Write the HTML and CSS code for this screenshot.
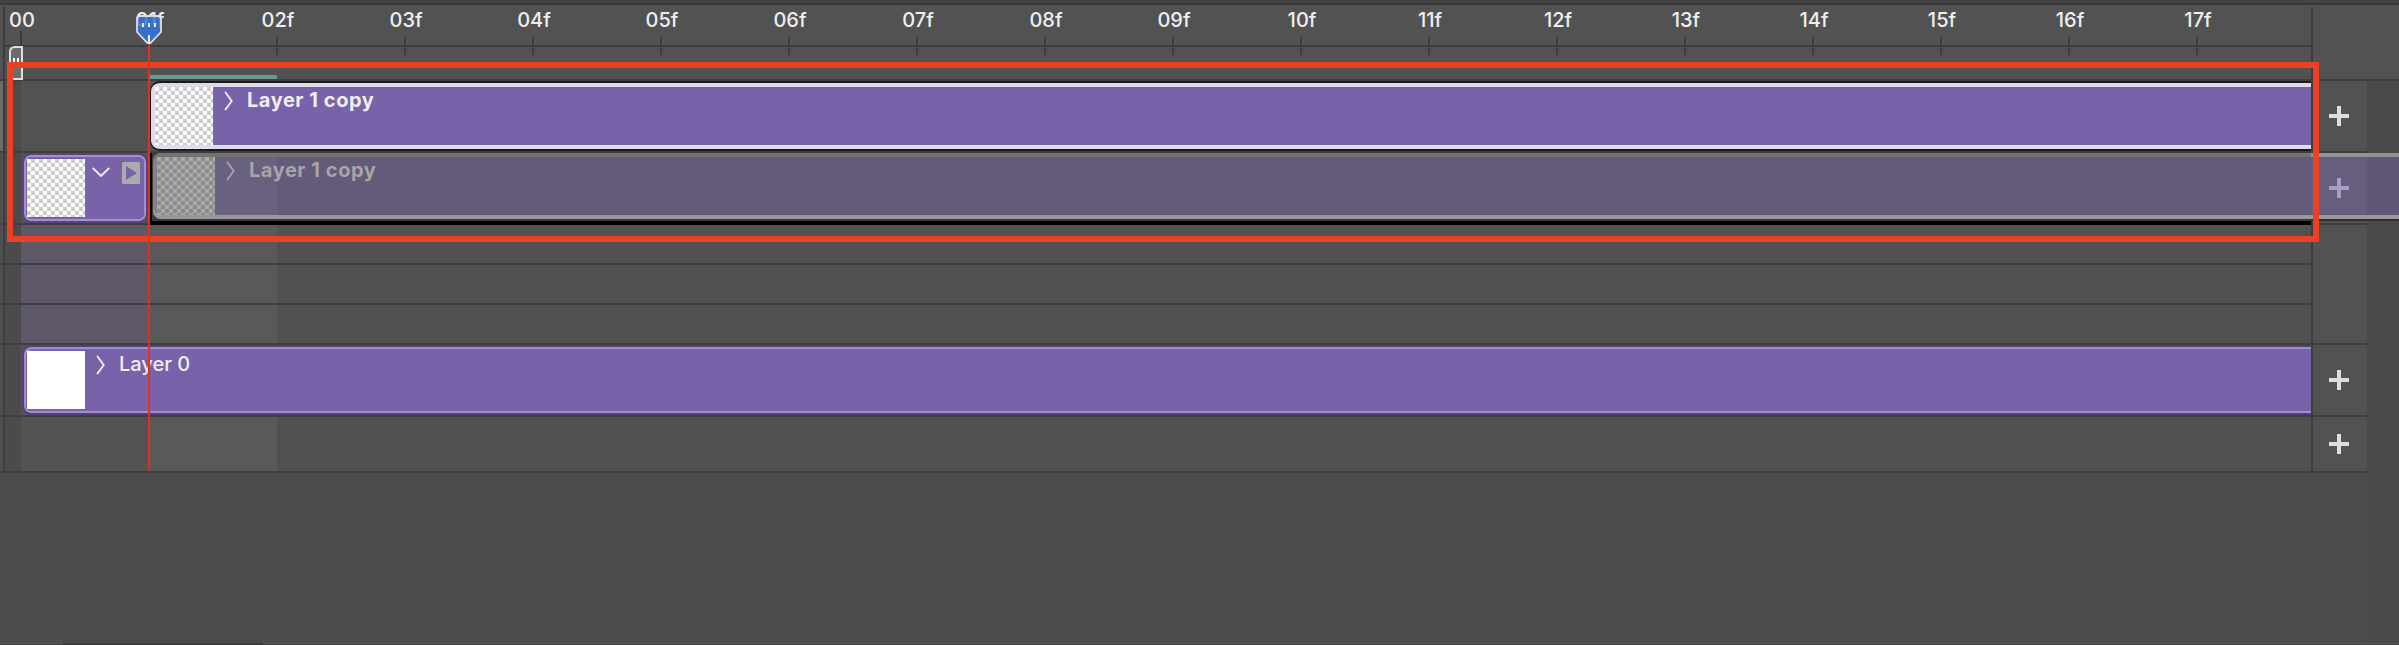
FILE: index.html
```html
<!DOCTYPE html>
<html lang="en">
<head>
<meta charset="utf-8">
<title>Timeline</title>
<link rel="stylesheet" href="styles.css">
</head>
<body>
<main class="timeline">
  <div class="top-edge"></div>
  <header class="header">
    <div class="edge"></div>
    <div class="ruler">
      <div class="scale">
        <div class="frame first"><span>00</span></div><div class="frame"><span>01f</span></div><div class="frame"><span>02f</span></div><div class="frame"><span>03f</span></div><div class="frame"><span>04f</span></div><div class="frame"><span>05f</span></div><div class="frame"><span>06f</span></div><div class="frame"><span>07f</span></div><div class="frame"><span>08f</span></div><div class="frame"><span>09f</span></div><div class="frame"><span>10f</span></div><div class="frame"><span>11f</span></div><div class="frame"><span>12f</span></div><div class="frame"><span>13f</span></div><div class="frame"><span>14f</span></div><div class="frame"><span>15f</span></div><div class="frame"><span>16f</span></div><div class="frame"><span>17f</span></div>
      </div>
      <div class="cache"><div class="cache-bar"></div></div>
    </div>
  </header>

  <section class="row tall">
    <div class="edge selected"></div>
    <div class="track plain">
      <div class="clip active">
        <div class="thumb checker"></div>
        <svg class="chevron" viewBox="0 0 10 20"><path d="M1.5 1.5 L7.7 10 L1.5 18.5"/></svg>
        <span class="name bold">Layer 1 copy</span>
      </div>
    </div>
    <div class="add"><i class="plus"></i></div>
  </section>

  <section class="row tall">
    <div class="edge"></div>
    <div class="track plain">
      <div class="clip short">
        <div class="thumb checker"></div>
        <svg class="chevron-down" viewBox="0 0 18 11"><path d="M1.3 1.5 L9 9 L16.7 1.5"/></svg>
        <svg class="play" viewBox="0 0 18 22"><rect width="18" height="22" rx="1.5" fill="#ababab"/><path d="M4 4 L15 11 L4 18 Z" fill="#7862a9"/></svg>
      </div>
      <div class="ghost-box">
        <div class="clip ghost">
          <div class="thumb checker dim"></div>
          <svg class="chevron" viewBox="0 0 10 20"><path d="M1.5 1.5 L7.7 10 L1.5 18.5"/></svg>
          <span class="name bold">Layer 1 copy</span>
        </div>
      </div>
    </div>
    <div class="add"></div>
    <div class="ghost-tail"><i class="plus faded"></i></div>
  </section>

  <section class="row slim group"><div class="edge"></div><div class="track"></div><div class="add"></div></section>
  <section class="row slim group"><div class="edge"></div><div class="track"></div><div class="add"></div></section>
  <section class="row slim group last"><div class="edge"></div><div class="track"></div><div class="add"></div></section>

  <section class="row tall">
    <div class="edge"></div>
    <div class="track">
      <div class="clip base">
        <div class="thumb"></div>
        <svg class="chevron" viewBox="0 0 10 20"><path d="M1.5 1.5 L7.7 10 L1.5 18.5"/></svg>
        <span class="name">Layer 0</span>
      </div>
    </div>
    <div class="add"><i class="plus"></i></div>
  </section>

  <section class="row foot">
    <div class="edge"></div><div class="track"></div><div class="add"><i class="plus"></i></div>
  </section>

  <div class="empty"></div>
  <div class="scrollbar"><div class="scroll-thumb"></div></div>

  <svg class="range-handle" viewBox="0 0 14 34"><path d="M1 33 V6 Q1 1 6 1 H13 V33 Z" fill="#6c6c6c" stroke="#dedede" stroke-width="2"/><path d="M5 12 V22 M9 12 V22" stroke="#fff" stroke-width="2"/></svg>
  <div class="callout"></div>
  <div class="playline"></div>
  <svg class="playhead" viewBox="0 0 26 29"><path d="M1 3 L3 1 H23 L25 3 V17 L14.5 28 H11.5 L1 17 Z" fill="#396fc8" stroke="#d9dde3" stroke-width="1.8"/><path d="M7 8 V12 M13 8 V12 M19 8 V12 M13 20 V28" stroke="#e9eef7" stroke-width="2"/></svg>
  <span class="through">01f</span>
</main>
</body>
</html>
```

FILE: styles.css
```css
* { box-sizing: border-box; }
body { margin: 0; background: #4c4c4c; font-family: Inter, "Liberation Sans", sans-serif; color: #eee; }
.timeline { position: relative; width: 2399px; height: 645px; overflow: hidden; display: flex; flex-direction: column; }
.top-edge { height: 5px; flex: none; background: #434343; border-bottom: 2px solid #393939; }

.header { height: 76px; flex: none; display: flex; padding-top: 2px; background: #525252; border-bottom: 2px solid #3e3e3e; }
.edge { width: 5px; flex: none; background: #4f4f4f; border-right: 2px solid #3d3d3d; border-bottom: 2px solid #3e3e3e; }
.edge.selected { background: #6b6b6b; }
.header .edge { background: #525252; border-bottom: 0; }
.ruler { width: 2308px; border-right: 2px solid #3d3d3d; display: flex; flex-direction: column; }
.scale { height: 40px; flex: none; display: flex; overflow: visible; border-bottom: 2px solid #3e3e3e; padding-left: 15px; }
.frame { width: 128px; height: 48px; flex: none; display: flex; font-size: 20px; font-weight: 500; line-height: 26px;
  background: linear-gradient(#3d3d3d, #3d3d3d) 0 30px / 2px 18px no-repeat; }
.frame.first { background-position: 0 24px; background-size: 2px 14px; }
.frame span { width: 60px; margin-left: -28px; height: 26px; text-align: center; }
.cache { flex: 1; display: flex; align-items: flex-end; padding-left: 145px; }
.cache-bar { width: 127px; height: 4px; background: #6c9790; }

.row { position: relative; flex: none; display: flex; background: linear-gradient(#494949, #494949) 2367px 0 no-repeat; }
.tall { height: 72px; }
.slim { height: 40px; }
.foot { height: 56px; }
.track { width: 2308px; flex: none; display: flex; border-right: 2px solid #3d3d3d; border-bottom: 2px solid #3e3e3e;
  background: linear-gradient(90deg, #4b4b4b 16px, #535353 16px 144px, #595959 144px 272px, #505050 272px); }
.track.plain { background: linear-gradient(90deg, #4b4b4b 16px, #525252 16px); }
.group .track { background: linear-gradient(90deg, #4b4b4b 16px, #5e5869 16px 144px, #595959 144px 272px, #515151 272px); }
.add { width: 54px; flex: none; display: flex; align-items: center; justify-content: center; padding-right: 2px; background: #525252; border-bottom: 2px solid #3e3e3e; }
.group .add { border-bottom: 0; }
.group.last .add { border-bottom: 2px solid #3e3e3e; }
.plus { width: 20px; height: 20px; background:
  linear-gradient(#dedede, #dedede) 8px 0 / 4px 20px no-repeat,
  linear-gradient(#dedede, #dedede) 0 8px / 20px 4px no-repeat; }
.plus.faded { background:
  linear-gradient(#a99dc4, #a99dc4) 8px 0 / 4px 20px no-repeat,
  linear-gradient(#a99dc4, #a99dc4) 0 8px / 20px 4px no-repeat; }

.clip { display: flex; background: #7862a9; }
.thumb { width: 58px; height: 58px; flex: none; background: #fff; }
.thumb.checker { background: conic-gradient(#ccc 25%, #fff 0 50%, #ccc 0 75%, #fff 0) 0 0 / 8px 8px; }
.thumb.dim { background: conic-gradient(#8b8b8b 25%, #a9a9a9 0 50%, #8b8b8b 0 75%, #a9a9a9 0) 0 0 / 8px 8px; }
.chevron { width: 10px; height: 20px; flex: none; margin: 4px 0 0 10px; }
.chevron path, .chevron-down path { fill: none; stroke: #efecf6; stroke-width: 1.9; stroke-linecap: round; }
.name { margin: 0 0 0 13px; font-size: 20px; font-weight: 500; line-height: 27px; white-space: nowrap; }
.bold { font-weight: 700; letter-spacing: .55px; }

.active { margin-left: 145px; width: 2161px; height: 70px; padding: 4px 0 0 4px; border: 2px solid #1a191c; border-left-width: 1px; border-right: 0; border-radius: 10px 0 0 10px; box-shadow: inset 0 4px #dedae9, inset 4px 0 #dedae9, inset 0 -4px #e2dbf0; }
.active .chevron { margin-left: 11px; }

.short { margin-left: 17px; width: 126px; height: 70px; flex: none; padding: 4px 3px; border: 2px solid #55447f; border-radius: 9px; box-shadow: inset 0 0 0 2px #a491cc; }
.chevron-down { width: 18px; height: 11px; margin: 8px 0 0 7px; flex: none; }
.play { width: 18px; height: 22px; margin: 3px 0 0 12px; flex: none; }

.ghost-box { width: 2162px; height: 72px; margin-left: 1px; flex: none; border-bottom: 4px solid #000; border-left: 3px solid #000; background: #3a3a3c; }
.ghost { height: 66px; margin-left: 1px; padding: 4px 0 0 4px; border-radius: 8px 0 0 8px; color: #a7a5a9;
  background: linear-gradient(90deg, #6a607f 124px, #645a7a 124px); box-shadow: inset 0 4px #737373, inset 0 -4px #99979b, inset 4px 0 #858388; }
.ghost .chevron { margin-left: 11px; }
.ghost .chevron path { stroke: #a6a1ad; }
.ghost-tail { position: absolute; left: 2311px; top: 0; width: 88px; height: 68px; display: flex; align-items: center; padding-left: 18px;
  background: linear-gradient(90deg, #675e7f 56px, #605678 56px); border-top: 4px solid #939195; border-bottom: 2px solid #2d2d2f; box-shadow: inset 0 -4px #99979c; }
.ghost-tail .plus { margin-top: 0; }

.base { margin-left: 17px; width: 2289px; height: 70px; padding: 4px 0 0 3px; border: 2px solid #503f78; border-right: 0; border-radius: 9px 0 0 9px; box-shadow: inset 2px 2px #a18dca, inset 0 -2px #a18dca; }
.base .chevron { margin-left: 11px; }

.empty { flex: 1; background: linear-gradient(90deg, #4c4c4c 2367px, #494949 2367px); }
.scrollbar { height: 2px; flex: none; padding-left: 63px; background: linear-gradient(#555 1px, #454244 1px); }
.scroll-thumb { width: 200px; height: 2px; background: #3b393a; }

.range-handle { position: absolute; left: 9px; top: 46px; width: 14px; height: 34px; }
.callout { position: absolute; left: 7px; top: 62px; width: 2312px; height: 180px; border: 6px solid #eb4024; }
.playline { position: absolute; left: 148px; top: 42px; width: 2px; height: 429px; background: #e12f20; }
.playhead { position: absolute; left: 136px; top: 15px; width: 26px; height: 29px; }
.through { position: absolute; left: 120px; top: 7px; width: 60px; font-size: 20px; font-weight: 500; line-height: 26px; text-align: center; opacity: .2; }
```
